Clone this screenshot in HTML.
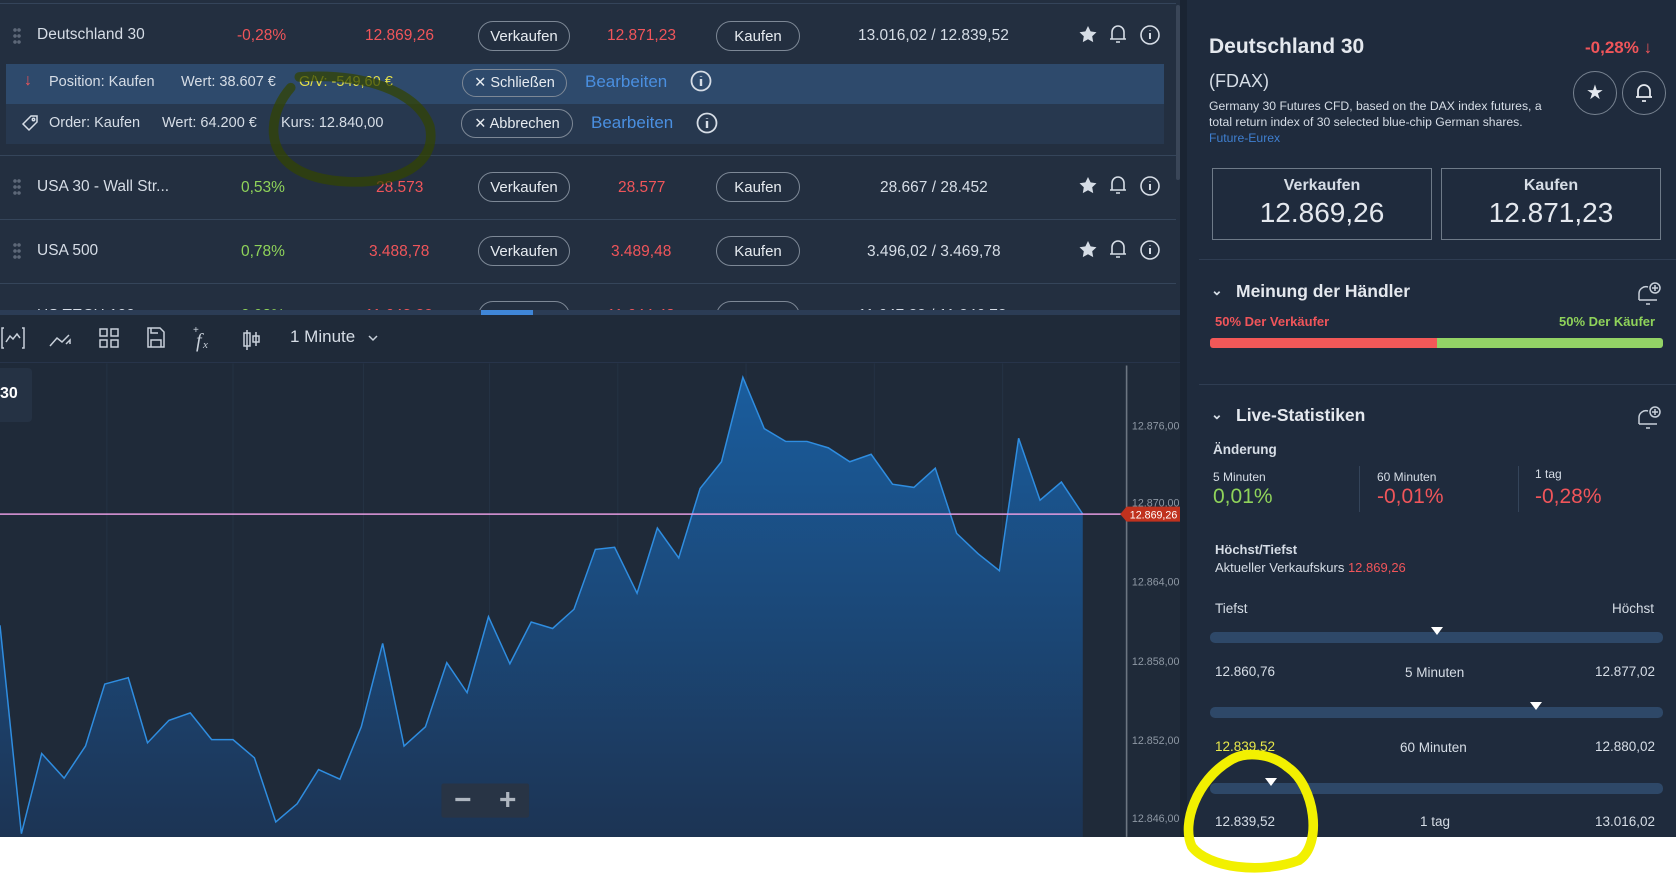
<!DOCTYPE html>
<html><head><meta charset="utf-8">
<style>
*{margin:0;padding:0;box-sizing:border-box}
body{width:1676px;height:874px;overflow:hidden;background:#fff;font-family:"Liberation Sans",Arial,sans-serif;color:#d6dde6;position:relative}
.a{position:absolute;white-space:nowrap}
.red{color:#f0555a}.grn{color:#8fd35a}
.btn{position:absolute;border:1px solid #7d8896;border-radius:16px;height:30px;font-size:15px;color:#e6ebf0;display:flex;align-items:center;justify-content:center}
.t15{font-size:15.5px}
.blue{color:#4a8fe0}
</style></head><body>
<div class="a" style="left:0;top:0;width:1180px;height:315px;background:#232f40"></div>
<div class="a" style="left:0;top:3px;width:1176px;height:1px;background:#34445a"></div>
<div class="a" style="left:1176px;top:5px;width:4px;height:175px;background:#3a4658;border-radius:2px"></div>

<div class="a" style="left:13px;top:27px;width:8px;height:18px;background:radial-gradient(circle,#5d6878 1.6px,transparent 2px) 0 0/4px 6px"></div>
<div class="a t15" style="left:37px;top:26px">Deutschland 30</div>
<div class="a t15 red" style="left:237px;top:27px">-0,28%</div>
<div class="a t15 red" style="left:365px;top:27px">12.869,26</div>
<div class="btn" style="left:478px;top:21px;width:92px">Verkaufen</div>
<div class="a t15 red" style="left:607px;top:27px">12.871,23</div>
<div class="btn" style="left:716px;top:21px;width:84px">Kaufen</div>
<div class="a t15" style="left:858px;top:27px">13.016,02 / 12.839,52</div>

<div class="a" style="left:6px;top:64px;width:1158px;height:40px;background:#2e4a6c"></div>
<div class="a" style="left:6px;top:104px;width:1158px;height:40px;background:#27384f"></div>
<div class="a red" style="left:24px;top:72px;font-size:16px;font-weight:bold">↓</div>
<div class="a" style="left:49px;top:74px;font-size:14.5px">Position: Kaufen</div>
<div class="a" style="left:181px;top:74px;font-size:14.5px">Wert: 38.607 €</div>
<div class="a" style="left:299px;top:74px;font-size:14.5px;color:#e4e04a">G/V: -549,60 €</div>
<div class="btn" style="left:462px;top:69px;width:105px;height:28px;font-size:14.5px">✕ Schließen</div>
<div class="a blue" style="left:585px;top:72px;font-size:17px">Bearbeiten</div>
<svg class="a" style="left:20px;top:114px" width="20" height="20" fill="none" stroke="#d6dde6" stroke-width="1.5"><path d="M3 10 l8-8 h6 v6 l-8 8z"/><circle cx="13.5" cy="5.5" r="1.2"/></svg>
<div class="a" style="left:49px;top:115px;font-size:14.5px">Order: Kaufen</div>
<div class="a" style="left:162px;top:115px;font-size:14.5px">Wert: 64.200 €</div>
<div class="a" style="left:281px;top:115px;font-size:14.5px">Kurs: 12.840,00</div>
<div class="btn" style="left:461px;top:109px;width:112px;height:29px;font-size:14.5px">✕ Abbrechen</div>
<div class="a blue" style="left:591px;top:113px;font-size:17px">Bearbeiten</div>
<div class="a" style="left:0;top:155px;width:1176px;height:1px;background:#35455a"></div>

<div class="a" style="left:13px;top:178px;width:8px;height:18px;background:radial-gradient(circle,#5d6878 1.6px,transparent 2px) 0 0/4px 6px"></div>
<div class="a t15" style="left:37px;top:178px">USA 30 - Wall Str...</div>
<div class="a t15 grn" style="left:241px;top:179px">0,53%</div>
<div class="a t15 red" style="left:376px;top:179px">28.573</div>
<div class="btn" style="left:478px;top:172px;width:92px">Verkaufen</div>
<div class="a t15 red" style="left:618px;top:179px">28.577</div>
<div class="btn" style="left:716px;top:172px;width:84px">Kaufen</div>
<div class="a t15" style="left:880px;top:179px">28.667 / 28.452</div>
<div class="a" style="left:0;top:219px;width:1176px;height:1px;background:#35455a"></div>

<div class="a" style="left:13px;top:242px;width:8px;height:18px;background:radial-gradient(circle,#5d6878 1.6px,transparent 2px) 0 0/4px 6px"></div>
<div class="a t15" style="left:37px;top:242px">USA 500</div>
<div class="a t15 grn" style="left:241px;top:243px">0,78%</div>
<div class="a t15 red" style="left:369px;top:243px">3.488,78</div>
<div class="btn" style="left:478px;top:236px;width:92px">Verkaufen</div>
<div class="a t15 red" style="left:611px;top:243px">3.489,48</div>
<div class="btn" style="left:716px;top:236px;width:84px">Kaufen</div>
<div class="a t15" style="left:867px;top:243px">3.496,02 / 3.469,78</div>
<div class="a" style="left:0;top:283px;width:1176px;height:1px;background:#35455a"></div>
<div class="a" style="left:0;top:301px;width:1176px;height:9px;overflow:hidden">
 <div class="a t15" style="left:37px;top:6px">US TECH 100</div>
 <div class="a t15 grn" style="left:241px;top:6px">0,98%</div>
 <div class="a t15 red" style="left:365px;top:6px">11.643,22</div>
 <div class="btn" style="left:478px;top:0;width:92px">Verkaufen</div>
 <div class="a t15 red" style="left:607px;top:6px">11.644,48</div>
 <div class="btn" style="left:716px;top:0;width:84px">Kaufen</div>
 <div class="a t15" style="left:858px;top:6px">11.647,22 / 11.246,72</div>
</div>
<div class="a" style="left:0;top:310px;width:1180px;height:5px;background:#2b3c55"></div>
<div class="a" style="left:481px;top:310px;width:52px;height:5px;background:#3f86d8"></div>

<svg class="a" style="left:1076px;top:0" width="100" height="290" viewBox="0 0 100 290" fill="none" stroke="#d6dde6" stroke-width="1.6">
 <g id="ic">
  <path d="M12 26 l2.6 5.4 5.9.8-4.3 4.1 1 5.8-5.2-2.8-5.2 2.8 1-5.8-4.3-4.1 5.9-.8z" fill="#d6dde6" stroke="none"/>
  <path d="M36 39 v-7 a6 6 0 0 1 12 0 v7 h2 h-16 M40 42 h4" />
  <circle cx="74" cy="35" r="9"/><path d="M74 33 v6 M74 30 v.5" stroke-width="2"/>
 </g>
 <use href="#ic" y="151"/><use href="#ic" y="215"/>
</svg>
<svg class="a" style="left:690px;top:70px" width="30" height="90" fill="none" stroke="#d6dde6" stroke-width="1.8">
 <circle cx="11" cy="11" r="9.5"/><path d="M11 9 v7 M11 6 v.6" stroke-width="2.4"/>
 <circle cx="17" cy="53" r="9.5"/><path d="M17 51 v7 M17 48 v.6" stroke-width="2.4"/>
</svg>

<div class="a" style="left:0;top:315px;width:1180px;height:522px;background:#1f2a39"></div>
<div class="a" style="left:0;top:362px;width:1180px;height:1px;background:#27344a"></div>
<div class="a" style="left:0;top:368px;width:32px;height:54px;background:#253244;border-radius:0 4px 4px 0"></div>
<div class="a" style="left:0;top:385px;font-size:16px;font-weight:bold;color:#fff">30</div>
<svg class="a" style="left:0;top:320px" width="420" height="36" fill="none" stroke="#c8d0da" stroke-width="1.5">
 <path d="M4 8 h-2 v20 h2 M22 8 h2 v20 h-2 M6 22 l4-6 3 3 4-5 3 4"/>
 <path d="M50 26 l7-8 5 4 7-7 M66 24 l4-4 v4"/>
 <rect x="100" y="9" width="7" height="7"/><rect x="111" y="9" width="7" height="7"/><rect x="100" y="20" width="7" height="7"/><rect x="111" y="20" width="7" height="7"/>
 <path d="M148 8 h12 l4 4 v15 h-16 z M151 27 v-7 h10 v7 M151 8 v5 h7"/>
 <text x="196" y="27" font-family="Liberation Serif" font-style="italic" font-size="20" fill="#c8d0da" stroke="none">f</text><text x="203" y="28" font-family="Liberation Serif" font-style="italic" font-size="11" fill="#c8d0da" stroke="none">x</text><text x="193" y="13" font-size="10" fill="#c8d0da" stroke="none">+</text>
 <path d="M247 10 v20 M244 13 h6 v13 h-6 z M256 12 v14 M253 16 h6 v6 h-6 z"/>
 <path d="M369 16 l4 4 4-4"/>
</svg>
<div class="a" style="left:290px;top:327px;font-size:17px;color:#d6dde6">1 Minute</div>

<svg class="a" style="left:0;top:0" width="1676" height="874" viewBox="0 0 1568 817.7" preserveAspectRatio="none">
 <defs><linearGradient id="g" x1="0" y1="0" x2="0" y2="1"><stop offset="0" stop-color="#1a5d9e"/><stop offset="1" stop-color="#1c3454"/></linearGradient></defs>
 <g stroke="#243244" stroke-width="1"><path d="M100 340 V783 M218 340 V783 M340 340 V783 M458 340 V783 M578 340 V783 M698 340 V783 M818 340 V783 M938 340 V783"/></g>
 <path d="M0 585 L20 780 L39 705 L60 728 L80 698 L98 640 L120 634 L138 695 L158 674 L178 667 L198 692 L218 692 L238 709 L258 769 L278 752 L298 720 L318 729 L338 680 L358 602 L378 698 L398 680 L418 620 L437 648 L457 577 L477 621 L497 582 L517 588 L537 570 L557 514 L575 512 L596 555 L615 494 L635 522 L655 457 L675 432 L695 353 L715 401 L735 413 L755 413 L775 419 L795 432 L815 425 L835 453 L855 456 L875 438 L895 499 L915 518 L935 534 L953 410 L973 468 L993 451 L1013 481 L1013 783 L0 783Z" fill="url(#g)"/>
 <path d="M0 585 L20 780 L39 705 L60 728 L80 698 L98 640 L120 634 L138 695 L158 674 L178 667 L198 692 L218 692 L238 709 L258 769 L278 752 L298 720 L318 729 L338 680 L358 602 L378 698 L398 680 L418 620 L437 648 L457 577 L477 621 L497 582 L517 588 L537 570 L557 514 L575 512 L596 555 L615 494 L635 522 L655 457 L675 432 L695 353 L715 401 L735 413 L755 413 L775 419 L795 432 L815 425 L835 453 L855 456 L875 438 L895 499 L915 518 L935 534 L953 410 L973 468 L993 451 L1013 481" fill="none" stroke="#2f8de0" stroke-width="1.4"/>
 <path d="M0 481 H1050" stroke="#e49be0" stroke-width="1.5"/>
 <path d="M1054 342 V783" stroke="#6c7682" stroke-width="1.5"/>
 <g fill="#8e98a4" font-size="10" font-family="Liberation Sans">
  <text x="1059" y="402">12.876,00</text><text x="1059" y="474">12.870,00</text><text x="1059" y="548">12.864,00</text><text x="1059" y="622">12.858,00</text><text x="1059" y="696">12.852,00</text><text x="1059" y="769">12.846,00</text>
 </g>
 <path d="M1048 481 l6 -7 h50 v14 h-50z" fill="#c0321e"/>
 <text x="1057" y="485" font-size="10" fill="#fff" font-family="Liberation Sans">12.869,26</text>
 <rect x="413" y="733" width="82" height="32" fill="#283445" rx="2"/>
 <path d="M426 748 h14 M468 748 h14 M475 741 v14" stroke="#aeb6c0" stroke-width="3"/>
</svg>

<div class="a" style="left:1180px;top:0;width:496px;height:837px;background:#1f2b3d"></div>
<div class="a" style="left:1180px;top:0;width:7px;height:837px;background:#1a2433"></div>
<div class="a" style="left:1209px;top:35px;font-size:21px;font-weight:bold;color:#e4e8ee">Deutschland 30</div>
<div class="a red" style="left:1585px;top:38px;font-size:17px;font-weight:bold">-0,28% ↓</div>
<div class="a" style="left:1209px;top:71px;font-size:18px">(FDAX)</div>
<div class="a" style="left:1209px;top:98px;font-size:12.2px;line-height:16px;color:#d6dde6">Germany 30 Futures CFD, based on the DAX index futures, a<br>total return index of 30 selected blue-chip German shares.<br><span style="color:#3f7fd0">Future-Eurex</span></div>
<div class="a" style="left:1573px;top:71px;width:44px;height:44px;border:1px solid #778290;border-radius:50%;color:#e4e8ee;font-size:20px;text-align:center;line-height:42px">★</div>
<div class="a" style="left:1622px;top:71px;width:44px;height:44px;border:1px solid #778290;border-radius:50%"></div>
<svg class="a" style="left:1634px;top:82px" width="20" height="22" fill="none" stroke="#e4e8ee" stroke-width="1.8"><path d="M4 15 v-6 a6 6 0 0 1 12 0 v6 h2 h-16 M8 19 h4"/></svg>
<div class="a" style="left:1212px;top:168px;width:220px;height:72px;border:1px solid #6e7a88;text-align:center">
 <div style="font-size:16px;font-weight:bold;margin-top:8px">Verkaufen</div><div style="font-size:28px;margin-top:2px;color:#e4e8ee">12.869,26</div></div>
<div class="a" style="left:1441px;top:168px;width:220px;height:72px;border:1px solid #6e7a88;text-align:center">
 <div style="font-size:16px;font-weight:bold;margin-top:8px">Kaufen</div><div style="font-size:28px;margin-top:2px;color:#e4e8ee">12.871,23</div></div>
<div class="a" style="left:1199px;top:259px;width:477px;height:1px;background:#2f3d52"></div>
<div class="a" style="left:1211px;top:282px;font-size:14px;font-weight:bold">⌄</div>
<div class="a" style="left:1236px;top:281px;font-size:17.5px;font-weight:bold;color:#e4e8ee">Meinung der Händler</div>
<svg class="a" style="left:1636px;top:280px" width="28" height="28" fill="none" stroke="#c8d0da" stroke-width="1.5"><path d="M3 20 v-6 a7 7 0 0 1 9-7 M3 20 h18 M10 24 h4"/><circle cx="19" cy="8" r="5"/><path d="M19 5 v6 M16 8 h6"/></svg>
<div class="a red" style="left:1215px;top:314px;font-size:13px;font-weight:bold">50% Der Verkäufer</div>
<div class="a grn" style="left:1559px;top:314px;font-size:13px;font-weight:bold">50% Der Käufer</div>
<div class="a" style="left:1210px;top:338px;width:227px;height:10px;background:#f25858;border-radius:3px 0 0 3px"></div>
<div class="a" style="left:1437px;top:338px;width:226px;height:10px;background:#93d366;border-radius:0 3px 3px 0"></div>
<div class="a" style="left:1199px;top:384px;width:477px;height:1px;background:#2f3d52"></div>
<div class="a" style="left:1211px;top:406px;font-size:14px;font-weight:bold">⌄</div>
<div class="a" style="left:1236px;top:405px;font-size:17.5px;font-weight:bold;color:#e4e8ee">Live-Statistiken</div>
<svg class="a" style="left:1636px;top:404px" width="28" height="28" fill="none" stroke="#c8d0da" stroke-width="1.5"><path d="M3 20 v-6 a7 7 0 0 1 9-7 M3 20 h18 M10 24 h4"/><circle cx="19" cy="8" r="5"/><path d="M19 5 v6 M16 8 h6"/></svg>
<div class="a" style="left:1213px;top:442px;font-size:13.5px;font-weight:bold">Änderung</div>
<div class="a" style="left:1213px;top:470px;font-size:12px">5 Minuten</div>
<div class="a grn" style="left:1213px;top:485px;font-size:21px">0,01%</div>
<div class="a" style="left:1359px;top:466px;width:1px;height:46px;background:#34445a"></div>
<div class="a" style="left:1377px;top:470px;font-size:12px">60 Minuten</div>
<div class="a red" style="left:1377px;top:485px;font-size:21px">-0,01%</div>
<div class="a" style="left:1518px;top:466px;width:1px;height:46px;background:#34445a"></div>
<div class="a" style="left:1535px;top:467px;font-size:12px">1 tag</div>
<div class="a red" style="left:1535px;top:485px;font-size:21px">-0,28%</div>
<div class="a" style="left:1215px;top:542px;font-size:13px;font-weight:bold">Höchst/Tiefst</div>
<div class="a" style="left:1215px;top:560px;font-size:13px">Aktueller Verkaufskurs <span class="red">12.869,26</span></div>
<div class="a" style="left:1215px;top:601px;font-size:13.5px">Tiefst</div>
<div class="a" style="left:1612px;top:601px;font-size:13.5px">Höchst</div>

<div class="a" style="left:1210px;top:632px;width:453px;height:11px;background:#2e4868;border-radius:5px"></div>
<div class="a" style="left:1431px;top:627px;border:6.5px solid transparent;border-top:8px solid #fff;border-bottom:0"></div>
<div class="a" style="left:1215px;top:664px;font-size:13.5px">12.860,76</div>
<div class="a" style="left:1405px;top:665px;font-size:13.5px">5 Minuten</div>
<div class="a" style="left:1595px;top:664px;font-size:13.5px">12.877,02</div>

<div class="a" style="left:1210px;top:707px;width:453px;height:11px;background:#2e4868;border-radius:5px"></div>
<div class="a" style="left:1530px;top:702px;border:6.5px solid transparent;border-top:8px solid #fff;border-bottom:0"></div>
<div class="a" style="left:1215px;top:739px;font-size:13.5px;color:#e8e84a">12.839,52</div>
<div class="a" style="left:1400px;top:740px;font-size:13.5px">60 Minuten</div>
<div class="a" style="left:1595px;top:739px;font-size:13.5px">12.880,02</div>

<div class="a" style="left:1210px;top:783px;width:453px;height:11px;background:#2e4868;border-radius:5px"></div>
<div class="a" style="left:1265px;top:778px;border:6.5px solid transparent;border-top:8px solid #fff;border-bottom:0"></div>
<div class="a" style="left:1215px;top:814px;font-size:13.5px">12.839,52</div>
<div class="a" style="left:1420px;top:814px;font-size:13.5px">1 tag</div>
<div class="a" style="left:1595px;top:814px;font-size:13.5px">13.016,02</div>

<svg class="a" style="left:0;top:0" width="1676" height="874" viewBox="0 0 1568 817.7" preserveAspectRatio="none" fill="none">
 <path d="M280 72 C340 68 390 85 402 118 C410 155 370 172 325 170 C280 168 258 150 256 125 C255 105 265 90 272 82" stroke="#334400" stroke-width="9" stroke-linecap="round" opacity="0.72"/>
 <path d="M1150 712 C1120 730 1105 770 1115 792 C1130 812 1180 818 1215 805 C1238 790 1230 735 1205 718 C1190 705 1165 702 1150 712" stroke="#f2f000" stroke-width="9" stroke-linecap="round"/>
</svg>
</body></html>
